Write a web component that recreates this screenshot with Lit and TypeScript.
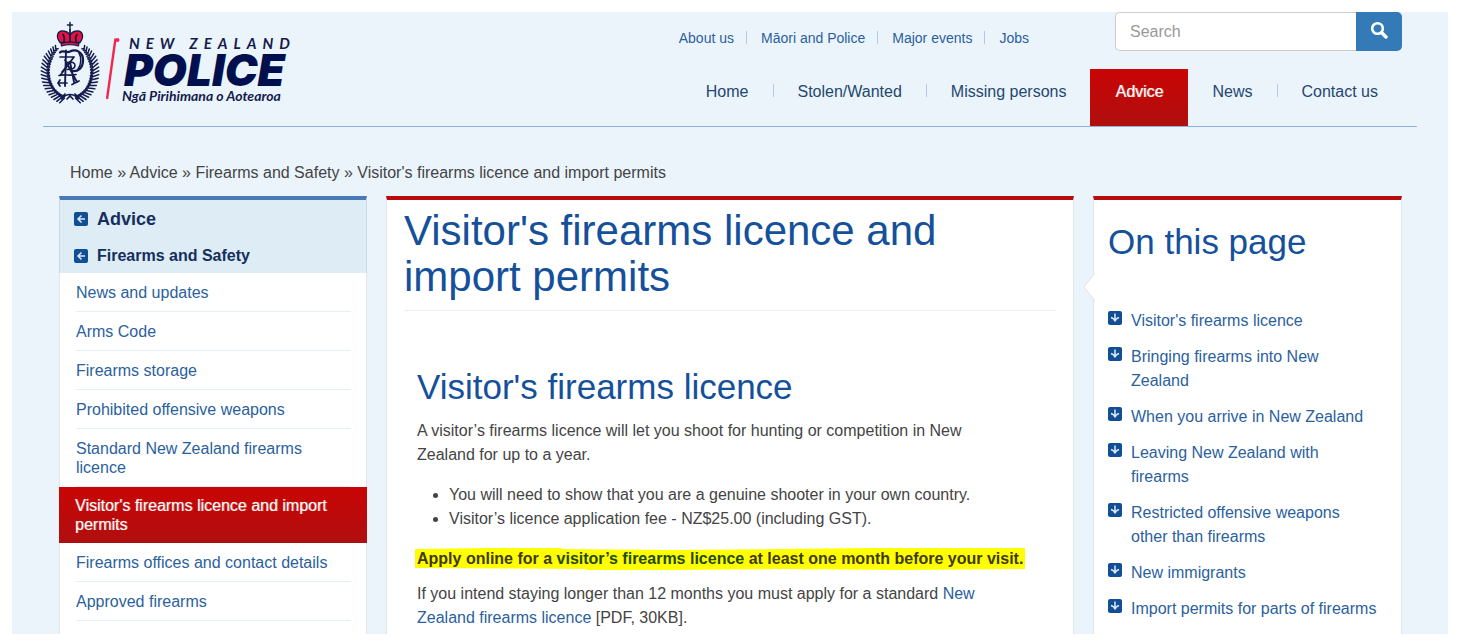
import { LitElement, html, svg, css } from 'lit';
import { customElement } from 'lit/decorators.js';
import { classMap } from 'lit/directives/class-map.js';

const UTILITY = ['About us', 'Māori and Police', 'Major events', 'Jobs'];
const PRIMARY = ['Home', 'Stolen/Wanted', 'Missing persons', 'Advice', 'News', 'Contact us'];
const SECTION = [
  'News and updates',
  'Arms Code',
  'Firearms storage',
  'Prohibited offensive weapons',
  'Standard New Zealand firearms licence',
  "Visitor's firearms licence and import permits",
  'Firearms offices and contact details',
  'Approved firearms',
];
const ON_PAGE = [
  "Visitor's firearms licence",
  'Bringing firearms into New Zealand',
  'When you arrive in New Zealand',
  'Leaving New Zealand with firearms',
  'Restricted offensive weapons other than firearms',
  'New immigrants',
  'Import permits for parts of firearms',
];

// Fern fronds: pairs of short leaves along one side of an oval stem.
const frond = (side: number) => {
  const leaves: string[] = [];
  const stem: string[] = [];
  const count = 21;
  for (let i = 0; i < count; i++) {
    const a = ((-52 + (i * 128) / (count - 1)) * Math.PI) / 180;
    const x = 34 + side * 23 * Math.cos(a);
    const y = 56 + 28 * Math.sin(a);
    stem.push(`${i ? 'L' : 'M'}${x.toFixed(1)} ${y.toFixed(1)}`);
    const size = Math.min(1, 0.5 + i / 10);
    const out = a - 0.55;
    const inn = a + Math.PI + 0.95;
    leaves.push(
      `M${x.toFixed(1)} ${y.toFixed(1)}l${(side * 6.6 * size * Math.cos(out)).toFixed(1)} ${(6.6 * size * Math.sin(out)).toFixed(1)}`,
      `M${x.toFixed(1)} ${y.toFixed(1)}l${(side * 4.6 * size * Math.cos(inn)).toFixed(1)} ${(4.6 * size * Math.sin(inn)).toFixed(1)}`,
    );
  }
  return svg`<path d=${leaves.join('')} stroke-width="1.5"/><path d=${stem.join('')} stroke-width=".8"/>`;
};

const crest = html`<svg class="crest" viewBox="0 0 70 95" aria-hidden="true">
  <g fill="none" stroke="#141b4d" stroke-linecap="round" stroke-linejoin="round">
    ${frond(-1)}${frond(1)}
    <path d="M34 7.500v7M31.500 10h5" stroke-width="1.500" />
    <path d="M24 27.500C19 21 22 15 27.500 16c3 .3 5.500 2 6.500 4.500 1-2.500 3.500-4.200 6.500-4.500C46 15 49 21 44 27.500z" fill="#e4123c" stroke-width="1.300" />
    <path d="M34 15v13M27 19.500c1.500 2 1.500 4.500 1 7M41 19.500c-1.500 2-1.500 4.500-1 7" stroke-width="1.800" />
    <path d="M25 28.500q9-2.800 18 0l-.5 2.500q-8.500-2.500-17 0z" fill="#e4123c" stroke-width="1.200" />
    <path d="M24 37.500c3-3 6 1 10-1 6-3 13 .5 13 8.500S42 57 36 56" stroke-width="2.300" />
    <path d="M43 38c2.500 4 2.500 12-1 16" stroke-width="1.500" />
    <path d="M24 42h14L24.500 60M38 42L26 57" stroke-width="1.700" />
    <path d="M30 35.500L29 71M34 47l4 20M29 45l12 22" stroke-width="1.900" />
    <path d="M23 60.500c7-2 10 1 17-1M22 68h9M36 69.500l7-3.500M24 65l-2 3 2 3" stroke-width="1.700" />
    <path d="M31 47.500c5-1 8 0 8 3s-3 4-8 4" stroke-width="1.600" />
    <path d="M26 84c4-6 12-6 16 0M29 79l-4 4M39 79l4 4M31 84l3-3 3 3" stroke-width="1.700" />
  </g>
</svg>`;

const slash = html`<svg class="slash" viewBox="0 0 14 64" aria-hidden="true">
  <path d="M1 62L9.500 1.500" fill="none" stroke="#f0284b" stroke-width="2.400" />
  <circle cx="11.500" cy="3" r="2" fill="#f0284b" />
</svg>`;

const arrow = (dir: 'left' | 'down') => html`<svg class="arrow" viewBox="0 0 14 14" aria-hidden="true">
  <rect width="14" height="14" rx="2" fill="#124e96" />
  <path
    d=${dir === 'left' ? 'M11 7H4M7.500 3.500L4 7l3.500 3.500' : 'M7 2.500V10M3 6.500Q6.500 7.500 7 10.500 7.500 7.500 11 6.500'}
    fill="none" stroke="#dcebf8" stroke-width="1.500" />
</svg>`;

@customElement('app-root')
export class AppRoot extends LitElement {
  static styles = css`
    :host {
      display: block;
      box-sizing: border-box;
      height: 100vh;
      padding: 12px 14px 10px 12px;
      background: #fff;
      color: #444;
      font: 16px/24px 'Liberation Sans', Arial, sans-serif;
    }
    * { box-sizing: border-box; }
    h1, h2, p, ul { margin: 0; padding: 0; }
    h1, h2 { color: #15509b; font-weight: 400; }
    a { color: #2b5f9e; text-decoration: none; }
    nav ul, .plain { list-style: none; }
    .sheet { height: 100%; overflow: hidden; background: #ebf4fb; }
    .header {
      display: flex;
      justify-content: space-between;
      margin: 0 31px;
      padding-right: 15px;
      border-bottom: 1px solid #8fb2da;
    }
    .brand { display: flex; align-items: flex-start; height: 100px; color: #141b4d; }
    .crest { width: 70px; height: 95px; margin: 3px 0 0 -7px; }
    .slash { width: 14px; height: 64px; margin-top: 25px; }
    .words { display: flex; flex-direction: column; padding: 22px 0 0 2px; }
    .over { padding-left: 7px; font: italic 700 15px/18px Lato, sans-serif; letter-spacing: 6px; }
    .name { padding-left: 2px; color: #00104f; font: italic 900 44px/36px Inter, sans-serif; }
    .under { font: italic 700 14px/16px Lato, sans-serif; }
    .tools { display: flex; flex-direction: column; align-items: flex-end; gap: 18px; }
    .top { display: flex; align-items: center; gap: 86px; }
    .utility ul, .primary ul { display: flex; }
    .utility { padding-top: 12px; }
    .utility a { display: block; padding: 0 12px 0 15px; font-size: 14px; line-height: 24px; }
    .utility li + li, .primary li + li {
      background: linear-gradient(#b3c9e3, #b3c9e3) left 5px / 1px 13px no-repeat;
    }
    .primary li + li { background-position: left 15px; }
    .utility li:last-child a { padding-right: 0; }
    .primary a { display: block; padding: 11px 24px 22px 25px; color: #24476f; }
    .primary a.current {
      background: linear-gradient(#c90505, #b00f0f);
      color: #fff;
      text-shadow: 1px 0 0 rgb(255 255 255 / 45%);
    }
    .primary li:nth-child(5) { background: none; }
    .search { display: flex; width: 287px; height: 39px; }
    .search input {
      flex: 1;
      min-width: 0;
      padding: 0 14px;
      border: 1px solid #ccc;
      border-right: 0;
      border-radius: 5px 0 0 5px;
      background: #fff;
      font: inherit;
    }
    .search input::placeholder { color: #999; opacity: 1; }
    .search button {
      display: grid;
      place-items: center;
      width: 46px;
      padding: 0 0 3px;
      border: 0;
      border-radius: 0 5px 5px 0;
      background: #337ab7;
    }
    .search svg { width: 18px; height: 18px; }
    .crumbs { padding: 34px 58px 11px; }
    .crumbs a { color: inherit; }
    .columns {
      display: grid;
      grid-template-columns: minmax(0, 308fr) minmax(0, 688fr) minmax(0, 309fr);
      gap: 19px;
      margin: 0 46px 0 47px;
      height: 100%;
    }
    .side, .main, .aside { background: #fff; border: 1px solid #e2e6e9; border-width: 4px 1px 0; }
    .side { border-top-color: #4a7ab5; }
    .main, .aside { border-top-color: #b90b0b; }
    .head { height: 73px; margin: 0 -1px; padding: 0 14px; background: #deecf6; border: 1px solid #c6daee; border-width: 0 1px; }
    .head a { display: flex; align-items: center; gap: 9px; height: 37px; color: #142f5c; font-weight: 700; }
    .head a:first-child { font-size: 18px; }
    .arrow { flex: none; width: 14px; height: 14px; }
    .section { line-height: 19px; }
    .section li { margin: 0 15px 0 16px; padding: 10px 0 9px; border-bottom: 1px solid #e1f0fa; }
    .section li.current {
      margin: 0 -1px;
      padding: 9px 24px 9px 16px;
      border: 0;
      background: linear-gradient(#c90505, #b00f0f);
    }
    .section li.current a { color: #fff; text-shadow: 1px 0 0 rgb(255 255 255 / 35%); }
    .main { padding: 8px 17px; }
    h1 { padding-bottom: 10px; border-bottom: 1px solid #eee; font-size: 42px; line-height: 46px; }
    .body { padding: 56px 34px 0 13px; }
    h2 { font-size: 35px; line-height: 40px; }
    .body h2 { margin-bottom: 12px; }
    .body ul { margin: 16px 0; padding-left: 32px; }
    .body p + p { margin-top: 11px; }
    mark {
      display: inline-block;
      vertical-align: top;
      margin-left: -2px;
      padding: 0 2px;
      background: #ff0;
      color: #40390a;
      font-weight: 700;
      white-space: nowrap;
      clip-path: polygon(0 2px, 12% 1px, 24% 1px, 24% 2px, 42% 3px, 60% 2px, 75% 1px, 100% 1px, 100% 22px, 80% 23px, 60% 22px, 42% 23px, 28% 23px, 28% 22px, 0 21px);
    }
    mark a { color: #1f4a08; }
    .aside { position: relative; padding: 22px 23px 0 14px; }
    .notch { position: absolute; left: -11px; top: 73px; width: 12px; height: 28px; }
    .plain { padding-top: 47px; }
    .plain li { margin-bottom: 12px; }
    .plain a { display: flex; gap: 9px; }
    .plain .arrow { margin-top: 2px; }
  `;

  render() {
    return html`<div class="sheet">
      <header class="header">
        <a class="brand" href="#" aria-label="New Zealand Police">
          ${crest}${slash}
          <span class="words">
            <span class="over">NEW ZEALAND</span>
            <span class="name">POLICE</span>
            <span class="under">Ngā Pirihimana o Aotearoa</span>
          </span>
        </a>
        <div class="tools">
          <div class="top">
            <nav class="utility" aria-label="Utility"><ul>${UTILITY.map((t) => html`<li><a href="#">${t}</a></li>`)}</ul></nav>
            <form class="search" role="search">
              <input type="search" placeholder="Search" aria-label="Search" />
              <button type="button" aria-label="Search">
                <svg viewBox="0 0 18 18" fill="none" stroke="#fff"><circle cx="7.500" cy="7.500" r="5.300" stroke-width="2.600" /><path d="M11.500 11.500L16 16" stroke-width="3.400" stroke-linecap="round" /></svg>
              </button>
            </form>
          </div>
          <nav class="primary" aria-label="Main"><ul>
            ${PRIMARY.map((t) => html`<li><a href="#" class=${classMap({ current: t === 'Advice' })}>${t}</a></li>`)}
          </ul></nav>
        </div>
      </header>
      <nav class="crumbs" aria-label="Breadcrumb"><a href="#">Home</a> » <a href="#">Advice</a> » <a href="#">Firearms and Safety</a> » Visitor's firearms licence and import permits</nav>
      <div class="columns">
        <nav class="side" aria-label="Section">
          <div class="head">
            <a href="#">${arrow('left')}Advice</a>
            <a href="#">${arrow('left')}Firearms and Safety</a>
          </div>
          <ul class="section">
            ${SECTION.map((t) => html`<li class=${classMap({ current: t.startsWith('Visitor') })}><a href="#">${t}</a></li>`)}
          </ul>
        </nav>
        <main class="main">
          <h1>Visitor's firearms licence and import permits</h1>
          <div class="body">
            <h2>Visitor's firearms licence</h2>
            <p>A visitor’s firearms licence will let you shoot for hunting or competition in New Zealand for up to a year.</p>
            <ul>
              <li>You will need to show that you are a genuine shooter in your own country.</li>
              <li>Visitor’s licence application fee - NZ$25.00 (including GST).</li>
            </ul>
            <p><mark>Apply online for a <a href="#">visitor’s firearms licence</a> at least one month before your visit.</mark></p>
            <p>If you intend staying longer than 12 months you must apply for a standard <a href="#">New Zealand firearms licence</a> [PDF, 30KB].</p>
          </div>
        </main>
        <aside class="aside">
          <svg class="notch" viewBox="0 0 12 28" aria-hidden="true"><path d="M12 0L1 14l11 14" fill="#fff" stroke="#dfe5e9" /></svg>
          <h2>On this page</h2>
          <ul class="plain">${ON_PAGE.map((t) => html`<li><a href="#">${arrow('down')}<span>${t}</span></a></li>`)}</ul>
        </aside>
      </div>
    </div>`;
  }
}
